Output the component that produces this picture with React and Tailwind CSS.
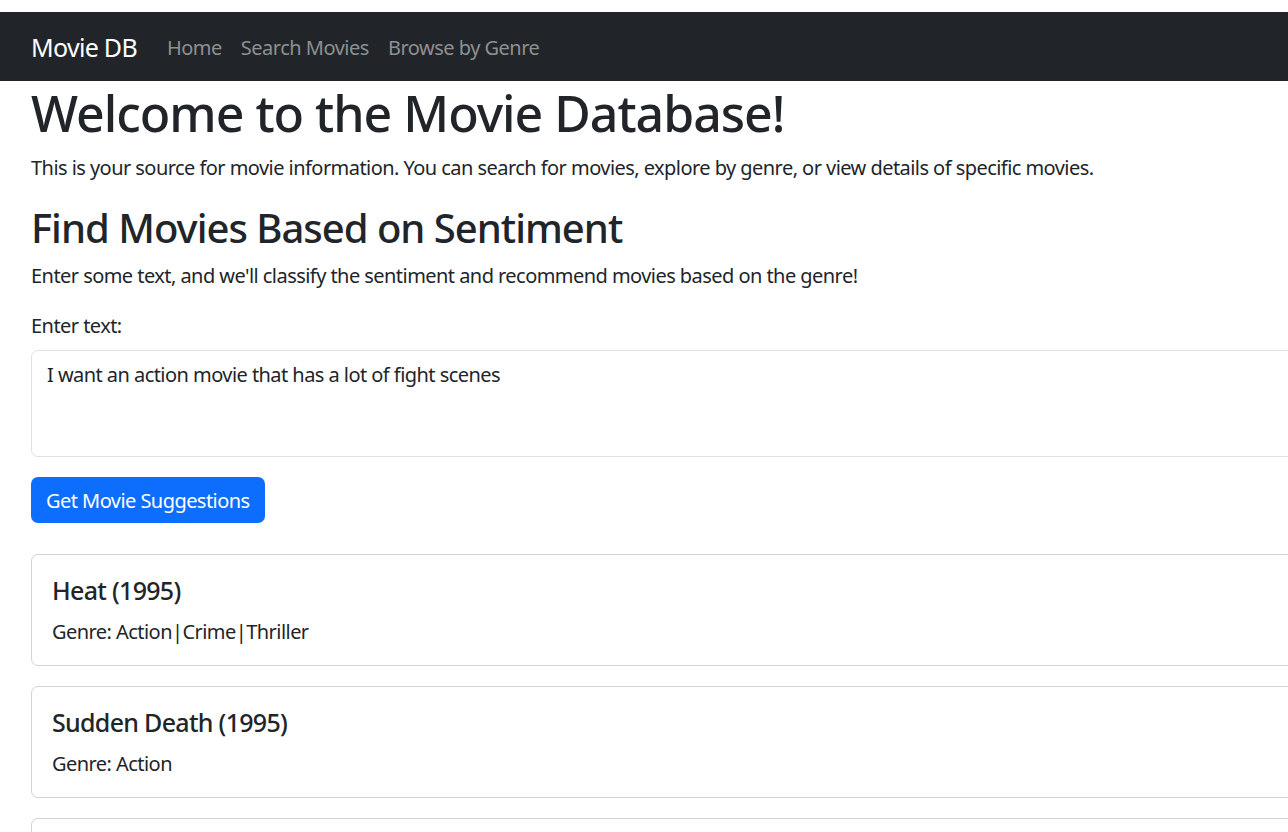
import { useState } from "react";

const movies = [
  { title: "Heat (1995)", genre: "Action|Crime|Thriller" },
  { title: "Sudden Death (1995)", genre: "Action" },
  { title: "GoldenEye (1995)", genre: "Action|Adventure|Thriller" },
];

export default function App() {
  const [text, setText] = useState("I want an action movie that has a lot of fight scenes");

  return (
    <div
      className="w-full overflow-x-hidden bg-white text-[#212529]"
      style={{ fontFamily: '"Noto Sans", "Open Sans", sans-serif' }}
    >
      <div className="w-[1500px] pt-3">
        {/* navbar */}
        <nav className="bg-[#212529] h-[69px] flex items-center px-[31px]">
          <a href="#" className="text-white text-[25px] leading-none tracking-[-0.7px] mr-[30px] pt-[2px]">
            Movie DB
          </a>
          <ul className="flex items-center gap-[19px] text-[20px] leading-none tracking-[-0.5px] text-[#8e9092] pt-[2px]">
            <li><a href="#">Home</a></li>
            <li><a href="#">Search Movies</a></li>
            <li><a href="#">Browse by Genre</a></li>
          </ul>
        </nav>

        <main className="px-[31px]">
          <h1 className="text-[50px] leading-[57px] pt-[4px] font-medium tracking-[-1px] mb-[10px]">
            Welcome to the Movie Database!
          </h1>
          <p className="text-[20px] leading-[28px] pt-[2px] tracking-[-0.55px] mb-5">
            This is your source for movie information. You can search for movies, explore by genre, or view details of specific movies.
          </p>

          <h2 className="text-[40px] leading-[45px] pt-[3px] font-medium tracking-[-1px] mb-[10px]">
            Find Movies Based on Sentiment
          </h2>
          <p className="text-[20px] leading-[28px] pt-[2px] tracking-[-0.55px] mb-5">
            Enter some text, and we'll classify the sentiment and recommend movies based on the genre!
          </p>

          <label className="block text-[20px] leading-[28px] pt-[2px] tracking-[-0.55px] mb-[10px]">Enter text:</label>
          <textarea
            value={text}
            onChange={(e) => setText(e.target.value)}
            className="block w-full h-[107px] resize-none border border-[#dee2e6] rounded-[7px] px-[15px] pt-[10px] pb-[7px] text-[20px] leading-[28px] tracking-[-0.55px] text-[#212529] outline-none mb-5"
          />

          <button className="h-[46px] bg-[#0d6efd] text-white text-[20px] leading-[28px] tracking-[-0.55px] rounded-[7px] px-[15px] pt-[2px] mb-[31px]">
            Get Movie Suggestions
          </button>

          <div className="flex flex-col gap-5">
            {movies.map((m) => (
              <div key={m.title} className="border border-[#d3d4d5] rounded-[7px] px-5 pt-5 pb-[18px]">
                <h5 className="text-[25px] leading-[30px] font-medium tracking-[-0.7px] mb-[10px]">{m.title}</h5>
                <p className="text-[20px] leading-[30px] tracking-[-0.55px] pt-[2px]">Genre: {m.genre}</p>
              </div>
            ))}
          </div>
        </main>
      </div>
    </div>
  );
}
